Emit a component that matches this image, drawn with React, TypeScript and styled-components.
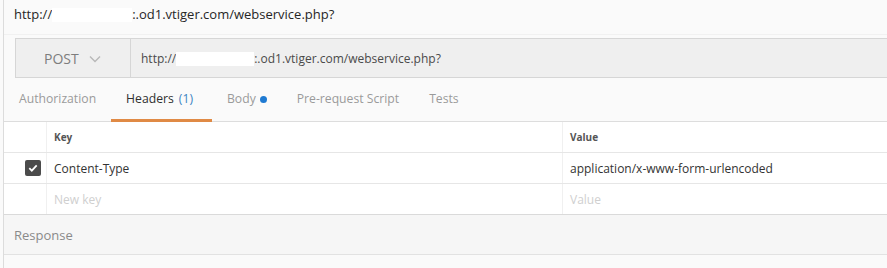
import { FunctionComponent } from "react";
import styled, { createGlobalStyle } from "styled-components";

const GlobalStyle = createGlobalStyle`
    html, body {
        margin: 0;
        padding: 0;
        background: #fafafa;
    }
    body {
        font-family: "Open Sans", "Liberation Sans", sans-serif;
        overflow: hidden;
    }
`;

const Page = styled.div`
    width: 887px;
    height: 268px;
    box-sizing: border-box;
    margin-left: 3px;
    border-left: 1px solid #dcdcdc;
    background: #fafafa;
    display: flex;
    flex-direction: column;
`;

const Title = styled.div`
    height: 35px;
    box-sizing: border-box;
    padding: 6px 0 0 10px;
    font-size: 13px;
    color: #262626;
    border-bottom: 1px solid #f1f1f1;
    display: flex;
    align-items: flex-start;
    line-height: 17px;
`;

const Redacted = styled.span<{ $w: number }>`
    display: inline-block;
    width: ${(p) => p.$w}px;
    height: 14px;
    background: #ffffff;
    margin-top: 2px;
`;

const RequestBar = styled.div`
    margin: 3px 0 0 11px;
    height: 40px;
    box-sizing: border-box;
    border: 1px solid #d6d6d6;
    border-right: none;
    background: #efefef;
    display: flex;
`;

const Method = styled.div`
    width: 115px;
    box-sizing: border-box;
    border-right: 1px solid #d6d6d6;
    display: flex;
    align-items: center;
    padding-left: 28px;
    gap: 10px;
    font-size: 14px;
    color: #7d7d7d;
    padding-top: 1px;
`;

const UrlInput = styled.div`
    flex: 1;
    display: flex;
    align-items: center;
    padding-left: 10px;
    font-size: 12px;
    color: #4a4a4a;
`;

const Tabs = styled.div`
    height: 44px;
    box-sizing: border-box;
    border-bottom: 1px solid #dddddd;
    display: flex;
    padding-left: 15px;
`;

const Tab = styled.div<{ $active?: boolean }>`
    display: flex;
    align-items: center;
    padding: 0 ${(p) => (p.$active ? 19 : 15)}px 0 15px;
    margin-bottom: -1px;
    font-size: 12.2px;
    color: ${(p) => (p.$active ? "#303030" : "#9a9a9a")};
    border-bottom: 3px solid ${(p) => (p.$active ? "#e08a45" : "transparent")};
    box-sizing: border-box;
    &:first-child {
        padding-left: 0;
    }
`;

const Count = styled.span`
    color: #3d84c2;
    margin-left: 5px;
`;

const Dot = styled.span`
    width: 7px;
    height: 7px;
    border-radius: 50%;
    background: #1f7ad2;
    margin-left: 4px;
    margin-top: 1px;
`;

const Table = styled.div`
    background: #ffffff;
    display: flex;
    flex-direction: column;
    border-bottom: 1px solid #dadada;
`;

const Row = styled.div<{ $h: number }>`
    height: ${(p) => p.$h}px;
    box-sizing: border-box;
    display: grid;
    grid-template-columns: 42px 516px 1fr;
    border-bottom: 1px solid #e6e6e6;
    &:last-child {
        border-bottom: none;
    }
`;

const Cell = styled.div<{ $head?: boolean; $muted?: boolean }>`
    display: flex;
    align-items: center;
    padding-left: 7px;
    border-left: 1px solid #f0f0f0;
    font-size: ${(p) => (p.$head ? "10px" : "12px")};
    font-weight: ${(p) => (p.$head ? 700 : 400)};
    color: ${(p) => (p.$head ? "#555555" : p.$muted ? "#cfcfcf" : "#333333")};
`;

const CheckCell = styled.div`
    display: flex;
    align-items: center;
    justify-content: flex-end;
    padding-right: 5px;
`;

const Checkbox = styled.span`
    width: 16px;
    height: 16px;
    border-radius: 2px;
    background: #4b4b4b;
    display: flex;
    align-items: center;
    justify-content: center;
`;

const Response = styled.div`
    height: 40px;
    box-sizing: border-box;
    background: #f6f6f6;
    border-bottom: 1px solid #e2e2e2;
    display: flex;
    align-items: center;
    padding-left: 10px;
    font-size: 13px;
    color: #8a8a8a;
`;

const Chevron = () => (
    <svg width="12" height="8" viewBox="0 0 12 8">
        <path d="M1 1.5 L6 6.5 L11 1.5" fill="none" stroke="#b8b8b8" strokeWidth="1.4" />
    </svg>
);

const Tick = () => (
    <svg width="10" height="8" viewBox="0 0 10 8">
        <path d="M1.3 4.2 L3.8 6.6 L8.7 1.4" fill="none" stroke="#ffffff" strokeWidth="1.8" />
    </svg>
);

const App: FunctionComponent = () => {
    return (
        <>
            <GlobalStyle />
            <Page>
                <Title>
                    http://
                    <Redacted $w={80} />
                    :.od1.vtiger.com/webservice.php?
                </Title>
                <RequestBar>
                    <Method>
                        POST
                        <Chevron />
                    </Method>
                    <UrlInput>
                        http://
                        <Redacted $w={78} />
                        :.od1.vtiger.com/webservice.php?
                    </UrlInput>
                </RequestBar>
                <Tabs>
                    <Tab>Authorization</Tab>
                    <Tab $active>
                        Headers<Count>(1)</Count>
                    </Tab>
                    <Tab>
                        Body<Dot />
                    </Tab>
                    <Tab>Pre-request Script</Tab>
                    <Tab>Tests</Tab>
                </Tabs>
                <Table>
                    <Row $h={31}>
                        <CheckCell />
                        <Cell $head>Key</Cell>
                        <Cell $head>Value</Cell>
                    </Row>
                    <Row $h={31}>
                        <CheckCell>
                            <Checkbox>
                                <Tick />
                            </Checkbox>
                        </CheckCell>
                        <Cell>Content-Type</Cell>
                        <Cell>application/x-www-form-urlencoded</Cell>
                    </Row>
                    <Row $h={30}>
                        <CheckCell />
                        <Cell $muted>New key</Cell>
                        <Cell $muted>Value</Cell>
                    </Row>
                </Table>
                <Response>Response</Response>
            </Page>
        </>
    );
};

export default App;
